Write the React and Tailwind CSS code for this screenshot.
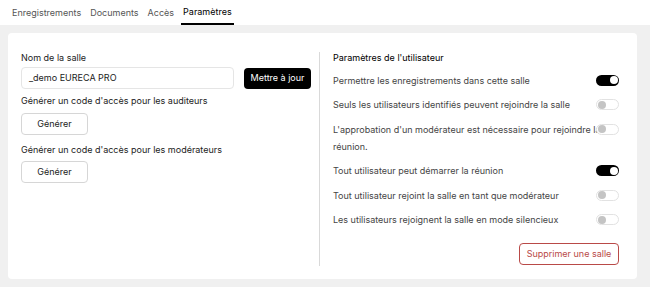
import React from 'react';

const Toggle = ({ on }) => (
  <div
    className={
      on
        ? 'w-[23px] h-[11px] rounded-full bg-black flex items-center justify-end px-[1.5px]'
        : 'w-[23px] h-[11px] rounded-full bg-white border border-[#e2e2e2] flex items-center justify-start px-[1px]'
    }
  >
    <div className={on ? 'w-[8px] h-[8px] rounded-full bg-white' : 'w-[8px] h-[8px] rounded-full bg-[#c4c4c4]'} />
  </div>
);

const settings = [
  { label: 'Permettre les enregistrements dans cette salle', on: true },
  { label: 'Seuls les utilisateurs identifiés peuvent rejoindre la salle', on: false },
  { label: "L'approbation d'un modérateur est nécessaire pour rejoindre la réunion.", on: false },
  { label: 'Tout utilisateur peut démarrer la réunion', on: true },
  { label: 'Tout utilisateur rejoint la salle en tant que modérateur', on: false },
  { label: 'Les utilisateurs rejoignent la salle en mode silencieux', on: false },
];

export default function App() {
  return (
    <div className="w-[650px] h-[287px] bg-[#f0f0f0] font-['Inter',sans-serif] text-[9px] text-[#222]">
      {/* tabs */}
      <div className="h-[25px] bg-white flex items-stretch px-[12px] gap-[9px] text-[#555]">
        <div className="flex items-center">Enregistrements</div>
        <div className="flex items-center">Documents</div>
        <div className="flex items-center">Accès</div>
        <div className="flex items-center -mx-[2px] px-[2px] text-black border-b-2 border-black">Paramètres</div>
      </div>

      <div className="pl-[8px] pr-[13px] pt-[8px]">
        <div className="bg-white rounded-[4px] h-[246px] flex pl-[13px] pr-[18px] pt-[19px] pb-[14px]">
          {/* left */}
          <div className="w-[290px] shrink-0 flex flex-col">
            <div className="leading-[12px]">Nom de la salle</div>
            <div className="flex items-center gap-[10px] mt-[3px]">
              <div className="w-[213px] h-[22px] border border-[#e5e5e5] rounded-[4px] flex items-center px-[7px]">
                _demo EURECA PRO
              </div>
              <button className="h-[21px] w-[67px] whitespace-nowrap bg-black text-white rounded-[4px]">Mettre à jour</button>
            </div>
            <div className="mt-[6px] leading-[12px]">Générer un code d'accès pour les auditeurs</div>
            <button className="mt-[6px] w-[67px] h-[22px] border border-[#d6d6d6] rounded-[4px] bg-white">Générer</button>
            <div className="mt-[9px] leading-[12px]">Générer un code d'accès pour les modérateurs</div>
            <button className="mt-[5px] w-[67px] h-[22px] border border-[#d6d6d6] rounded-[4px] bg-white">Générer</button>
          </div>

          {/* divider */}
          <div className="w-px bg-[#d9d9d9] ml-[8px] mr-[13px] h-[214px] shrink-0" />

          {/* right */}
          <div className="flex-1 min-w-0 flex flex-col">
            <div className="leading-[12px] text-black">Paramètres de l'utilisateur</div>
            <div className="flex flex-col mt-[7.5px] gap-[7.5px] text-[#444]">
              {settings.map((s, i) => (
                <div key={i} className="relative">
                  <div className="pr-[16px] leading-[17px]">{s.label}</div>
                  <div className="absolute right-0 top-[3px]">
                    <Toggle on={s.on} />
                  </div>
                </div>
              ))}
            </div>
            <div className="flex justify-end mt-auto">
              <button className="h-[22px] w-[100px] border border-[#b94a48] text-[#b94a48] rounded-[4px] bg-white">
                Supprimer une salle
              </button>
            </div>
          </div>
        </div>
      </div>
    </div>
  );
}
